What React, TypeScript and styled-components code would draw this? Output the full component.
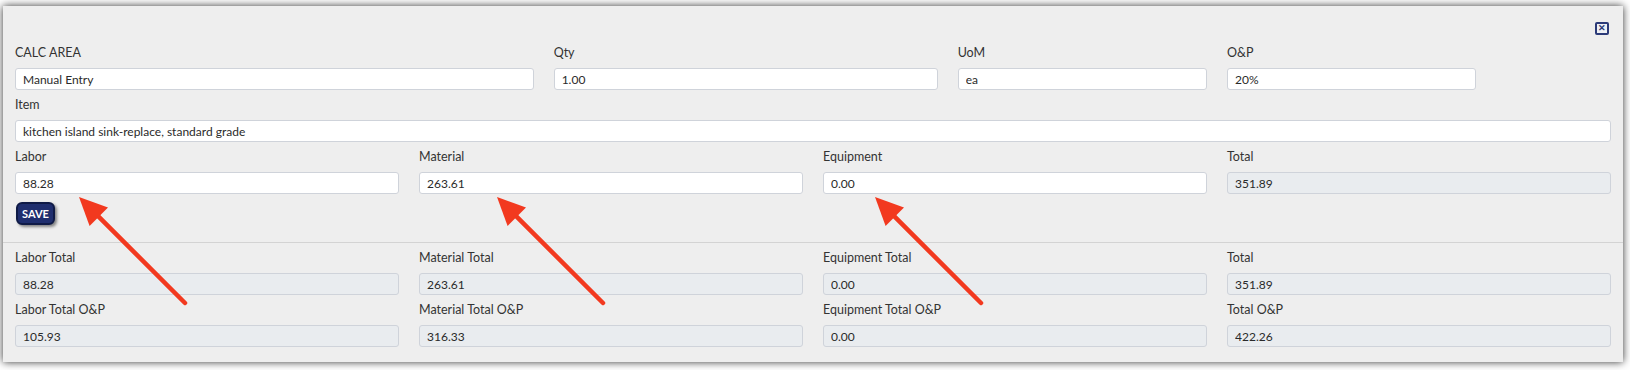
import styled, { createGlobalStyle } from 'styled-components';

const GlobalStyle = createGlobalStyle`
  html, body {
    margin: 0;
    padding: 0;
    background: #ffffff;
  }
  * {
    box-sizing: border-box;
  }
`;

const Page = styled.div`
  position: relative;
  width: 1630px;
  height: 370px;
  overflow: hidden;
  padding: 6px 0 0 3px;
  font-family: Lato, 'Noto Sans', sans-serif;
`;

const Panel = styled.div`
  width: 1620px;
  height: 356px;
  background: #eeeeee;
  box-shadow: 0 0 8px rgba(0, 0, 0, 0.8);
  display: flex;
  flex-direction: column;
`;

const CloseRow = styled.div`
  display: flex;
  justify-content: flex-end;
  padding: 16px 14px 0 0;
`;

const CloseButton = styled.button`
  width: 14px;
  height: 13px;
  padding: 0 0 1px;
  border: 2px solid #2b3a78;
  border-radius: 2px;
  background: #eef0f4;
  color: #2b3a78;
  font-size: 9px;
  font-weight: 700;
  line-height: 9px;
  font-family: 'Liberation Sans', sans-serif;
  display: flex;
  align-items: center;
  justify-content: center;
`;

const Section = styled.div`
  display: flex;
  flex-direction: column;
  gap: 7px;
  padding: 0 12px;
`;

const TopSection = styled(Section)`
  padding-top: 10px;
`;

const BottomSection = styled(Section)`
  padding-top: 7px;
`;

const Grid = styled.div`
  display: grid;
  grid-template-columns: repeat(12, 1fr);
  column-gap: 20px;
`;

const Field = styled.div<{ $span: number }>`
  grid-column: span ${(p) => p.$span};
  display: flex;
  flex-direction: column;
  gap: 7px;
`;

const Label = styled.label`
  font-size: 12.5px;
  line-height: 16px;
  color: #333333;
`;

const Input = styled.input<{ $readOnly?: boolean }>`
  width: 100%;
  height: 22px;
  padding: 0 7px;
  border: 1px solid #cfd3da;
  border-radius: 3px;
  background: ${(p) => (p.$readOnly ? '#e9ecef' : '#ffffff')};
  font-family: Lato, 'Noto Sans', sans-serif;
  font-size: 12px;
  color: #2a2a2a;
  outline: none;
`;

const SaveButton = styled.button`
  align-self: flex-start;
  margin: 1px 0 0 1px;
  width: 39px;
  height: 23px;
  padding: 0;
  border: 2px solid #0f1a46;
  border-radius: 6px;
  background: #1f2e6e;
  color: #ffffff;
  font-family: Lato, 'Noto Sans', sans-serif;
  font-size: 11px;
  font-weight: 700;
  box-shadow: 2px 2px 3px rgba(0, 0, 0, 0.45);
`;

const Divider = styled.hr`
  margin: 17px 0 0;
  border: none;
  border-top: 1px solid #d3d3d3;
`;

const Overlay = styled.svg`
  position: absolute;
  left: 0;
  top: 0;
  pointer-events: none;
`;

type Pt = [number, number];

function Arrow({ tip, tail }: { tip: Pt; tail: Pt }) {
  const dx = tail[0] - tip[0];
  const dy = tail[1] - tip[1];
  const len = Math.hypot(dx, dy);
  const ux = dx / len;
  const uy = dy / len;
  const headLen = 28;
  const half = 13;
  const bx = tip[0] + ux * headLen;
  const by = tip[1] + uy * headLen;
  const px = -uy;
  const py = ux;
  const head = `${tip[0]},${tip[1]} ${bx + px * half},${by + py * half} ${bx - px * half},${by - py * half}`;
  return (
    <g>
      <line
        x1={bx - ux * 2}
        y1={by - uy * 2}
        x2={tail[0]}
        y2={tail[1]}
        stroke="#f2391f"
        strokeWidth={4.5}
        strokeLinecap="round"
      />
      <polygon points={head} fill="#f2391f" />
    </g>
  );
}

type FieldDef = { label: string; value: string; span: number; readOnly?: boolean };

const topRow: FieldDef[] = [
  { label: 'CALC AREA', value: 'Manual Entry', span: 4 },
  { label: 'Qty', value: '1.00', span: 3 },
  { label: 'UoM', value: 'ea', span: 2 },
  { label: 'O&P', value: '20%', span: 2 },
];

const costRow: FieldDef[] = [
  { label: 'Labor', value: '88.28', span: 3 },
  { label: 'Material', value: '263.61', span: 3 },
  { label: 'Equipment', value: '0.00', span: 3 },
  { label: 'Total', value: '351.89', span: 3, readOnly: true },
];

const totalsRow: FieldDef[] = [
  { label: 'Labor Total', value: '88.28', span: 3, readOnly: true },
  { label: 'Material Total', value: '263.61', span: 3, readOnly: true },
  { label: 'Equipment Total', value: '0.00', span: 3, readOnly: true },
  { label: 'Total', value: '351.89', span: 3, readOnly: true },
];

const opRow: FieldDef[] = [
  { label: 'Labor Total O&P', value: '105.93', span: 3, readOnly: true },
  { label: 'Material Total O&P', value: '316.33', span: 3, readOnly: true },
  { label: 'Equipment Total O&P', value: '0.00', span: 3, readOnly: true },
  { label: 'Total O&P', value: '422.26', span: 3, readOnly: true },
];

function FieldRow({ fields }: { fields: FieldDef[] }) {
  return (
    <Grid>
      {fields.map((f) => (
        <Field key={f.label} $span={f.span}>
          <Label>{f.label}</Label>
          <Input defaultValue={f.value} readOnly={f.readOnly} $readOnly={f.readOnly} />
        </Field>
      ))}
    </Grid>
  );
}

export default function App() {
  return (
    <>
      <GlobalStyle />
      <Page>
        <Panel>
          <CloseRow>
            <CloseButton>✕</CloseButton>
          </CloseRow>
          <TopSection>
            <FieldRow fields={topRow} />
            <Grid>
              <Field $span={12}>
                <Label>Item</Label>
                <Input defaultValue="kitchen island sink-replace, standard grade" />
              </Field>
            </Grid>
            <FieldRow fields={costRow} />
            <SaveButton>SAVE</SaveButton>
          </TopSection>
          <Divider />
          <BottomSection>
            <FieldRow fields={totalsRow} />
            <FieldRow fields={opRow} />
          </BottomSection>
        </Panel>
        <Overlay width={1630} height={370}>
          <Arrow tip={[79, 197]} tail={[185, 303]} />
          <Arrow tip={[497, 197]} tail={[603, 303]} />
          <Arrow tip={[875, 197]} tail={[981, 303]} />
        </Overlay>
      </Page>
    </>
  );
}
